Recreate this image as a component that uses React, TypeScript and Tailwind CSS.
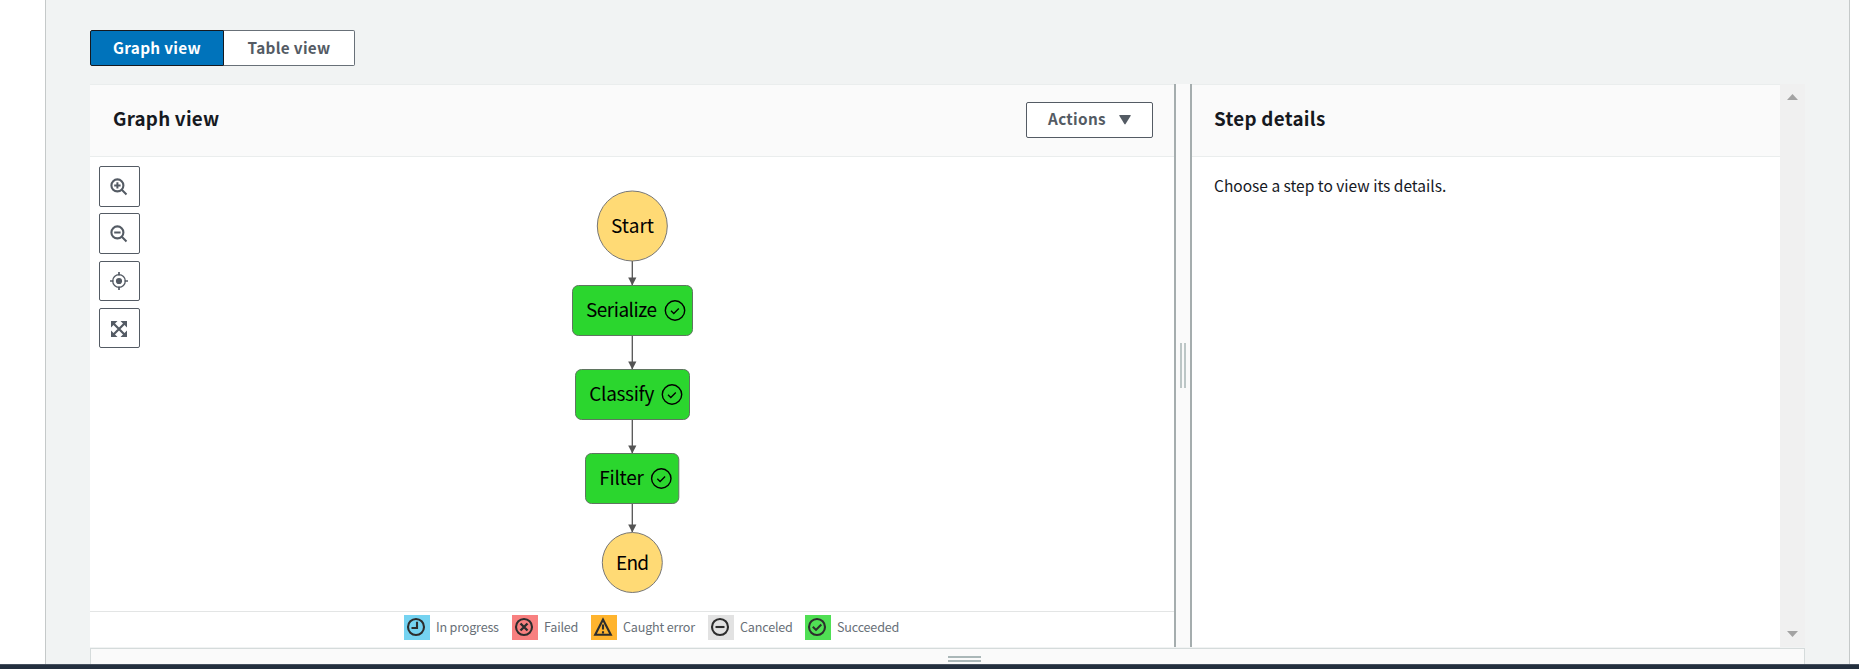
import type { ReactNode } from 'react';

const ink = '#545b64';

function ToolButton({ className, children }: { className: string; children: ReactNode }) {
  return (
    <button className={`flex w-[41px] items-center justify-center rounded-[2px] border border-[#545b64] bg-white pr-[2px] ${className}`}>
      <svg width="18" height="18" viewBox="0 0 18 18" fill="none" stroke={ink}>
        {children}
      </svg>
    </button>
  );
}

const steps = [
  { label: 'Serialize', x: 572.5, y: 285.5, w: 120, textX: 586, textW: 71, iconX: 675 },
  { label: 'Classify', x: 575.5, y: 369.5, w: 114, textX: 589.3, textW: 65, iconX: 672 },
  { label: 'Filter', x: 585.5, y: 453.5, w: 93.3, textX: 599.3, textW: 44.5, iconX: 661.3 },
];

const edges = [
  [261, 285],
  [336, 369],
  [420, 453],
  [504, 532],
];

function Graph() {
  return (
    <svg width="1084" height="454" viewBox="90 157 1084 454" fontSize="19" className="block font-['Noto_Sans_CJK_JP',sans-serif]">
      {edges.map(([from, to]) => (
        <g key={from}>
          <path d={`M632.3 ${from}V${to}`} stroke="#545454" strokeWidth="1.3" />
          <path d={`M628.2 ${to - 7.5}h8.2l-4.1 8z`} fill="#545454" />
        </g>
      ))}
      <circle cx="632.3" cy="226" r="35" fill="#ffda75" stroke="#777" />
      <text x="611" y="233.4" textLength="43">Start</text>
      {steps.map((s) => (
        <g key={s.label}>
          <rect x={s.x} y={s.y} width={s.w} height="50" rx="6" fill="#2bd62e" stroke="#5f7560" />
          <text x={s.textX} y={s.y + 31.7} textLength={s.textW}>{s.label}</text>
          <circle cx={s.iconX} cy={s.y + 25} r="9.7" fill="none" stroke="#000" strokeWidth="1.4" />
          <path d={`M${s.iconX - 4} ${s.y + 25.2}l2.8 2.8l5-5`} fill="none" stroke="#000" strokeWidth="1.3" />
        </g>
      ))}
      <circle cx="632.3" cy="562.5" r="30" fill="#ffda75" stroke="#777" />
      <text x="616" y="570.4" textLength="33">End</text>
    </svg>
  );
}

function LegendItem({ color, width, label, children }: { color: string; width: string; label: string; children: ReactNode }) {
  return (
    <div className={`flex h-[25px] items-center ${width}`}>
      <span className={`flex h-[25px] w-[26px] shrink-0 items-center justify-center pb-px pr-[2px] ${color}`}>
        <svg width="20" height="20" viewBox="0 0 20 20" fill="none" stroke="#2d2d2d" strokeWidth="2.1">
          {children}
        </svg>
      </span>
      <span className="ml-[6px] whitespace-nowrap pb-[2px] text-[12.6px] leading-5 tracking-[-0.2px] text-[#687078]">{label}</span>
    </div>
  );
}

export default function App() {
  return (
    <div className="flex h-[669px] w-full flex-col overflow-hidden bg-white font-['Noto_Sans_CJK_JP',sans-serif] text-[#16191f]">
      <div className="ml-[45px] h-[664px] w-[1805px] shrink-0 border-x border-[#c5c9c9] bg-[#f1f3f3] pl-[44px] pt-[30px]">
        <div className="flex h-9 text-[15.3px] font-bold tracking-[0.3px]">
          <button className="flex w-[134px] items-center justify-center rounded-l-[2px] border border-[#16191f] bg-[#0073bb] pb-[2px] text-white">Graph view</button>
          <button className="flex w-[131px] items-center justify-center rounded-r-[2px] border border-l-0 border-[#687078] bg-white pb-[2px] text-[#545b64]">Table view</button>
        </div>

        <div className="mt-[18px] flex h-[563px] w-[1715px]">
          <section className="flex w-[1084px] flex-col bg-white">
            <header className="flex h-[73px] shrink-0 items-center justify-between border-y border-[#eaeded] bg-[#fafafa] pb-[2px] pl-[23px] pr-[21px]">
              <h2 className="pb-[2px] text-[18.8px] font-bold tracking-[0.22px]">Graph view</h2>
              <button className="flex h-9 w-[127px] items-center justify-center gap-[13px] rounded-[2px] border border-[#545b64] bg-white text-[15.3px] font-bold tracking-[0.3px] text-[#545b64]">
                <span className="pb-[2px]">Actions</span>
                <svg width="12" height="10" viewBox="0 0 12 10" fill={ink}><path d="M.8 0h10.4q.8 0 .5.7L6.6 9q-.6.8-1.2 0L.3.7Q0 0 .8 0Z" /></svg>
              </button>
            </header>
            <div className="relative h-[454px] shrink-0">
              <Graph />
              <div className="absolute left-[9px] top-[9px] flex flex-col">
                <ToolButton className="h-[41px]">
                  <circle cx="7.4" cy="7.4" r="6" strokeWidth="2.1" />
                  <path d="M11.8 11.8l4.7 4.7M4.2 7.4h6.4M7.4 4.2v6.4" strokeWidth="2" />
                </ToolButton>
                <ToolButton className="mt-[6px] h-[41px]">
                  <circle cx="7.4" cy="7.4" r="6" strokeWidth="2.1" />
                  <path d="M11.8 11.8l4.7 4.7M4.2 7.4h6.4" strokeWidth="2" />
                </ToolButton>
                <ToolButton className="mt-[7px] h-10">
                  <circle cx="9" cy="9" r="6.3" strokeWidth="1.3" />
                  <circle cx="9" cy="9" r="3.1" fill={ink} stroke="none" />
                  <path d="M9 0v3.5M9 14.5v3.5M0 9h3.5M14.5 9h3.5" strokeWidth="1.7" />
                </ToolButton>
                <ToolButton className="mt-[7px] h-10 pt-px">
                  <path d="M2.5 2.5l13 13M15.5 2.5l-13 13" strokeWidth="2.2" />
                  <path d="M1 1h6.500L1 7.500ZM17 1v6.500L10.500 1ZM17 17h-6.500L17 10.500ZM1 17v-6.500L7.500 17Z" fill={ink} stroke="none" />
                </ToolButton>
              </div>
            </div>
            <footer className="flex h-[36px] border-t border-[#e3e5e5] pl-[314px] pt-[3px]">
              <LegendItem color="bg-[#75d3f1]" width="w-[108px]" label="In progress">
                <circle cx="10" cy="10" r="8" />
                <path d="M11 4.8V11H5.5" />
              </LegendItem>
              <LegendItem color="bg-[#f88080]" width="w-[79px]" label="Failed">
                <circle cx="10" cy="10" r="8" />
                <path d="M6.5 6.5l7 7M13.5 6.5l-7 7" strokeWidth="2.4" />
              </LegendItem>
              <LegendItem color="bg-[#ffb42e]" width="w-[117px]" label="Caught error">
                <path d="M10 2.5L2.2 17.7h15.6Z" />
                <path d="M10 7.5v5M10 14.2v2.3" />
              </LegendItem>
              <LegendItem color="bg-[#e2e2e2]" width="w-[97px]" label="Canceled">
                <circle cx="10" cy="10" r="8" />
                <path d="M5.5 10h9" />
              </LegendItem>
              <LegendItem color="bg-[#50df54]" width="w-[92px]" label="Succeeded">
                <circle cx="10" cy="10" r="8" />
                <path d="M5.8 9.8l3.2 3.1l5.3-5.3" />
              </LegendItem>
            </footer>
          </section>

          <div className="flex w-[18px] items-center justify-center gap-[2px] border-x-2 border-[#a5adae] bg-[#fafafa] pb-px">
            <i className="h-[45px] w-[2px] bg-[#bcc6c6]" />
            <i className="h-[45px] w-[2px] bg-[#bcc6c6]" />
          </div>

          <section className="w-[588px] bg-white">
            <header className="flex h-[73px] items-center border-y border-[#eaeded] bg-[#fafafa] pb-[4px] pl-[22px]">
              <h2 className="text-[18.8px] font-bold tracking-[0.28px]">Step details</h2>
            </header>
            <p className="pl-[22px] pt-[16px] text-[15.5px] leading-6">Choose a step to view its details.</p>
          </section>

          <div className="flex w-[25px] flex-col items-center justify-between bg-[#f0f0f0] pb-[10px] pt-[10px]">
            <svg width="11" height="6" viewBox="0 0 11 6" fill="#a3a3a3"><path d="M0 6L5.5 0L11 6Z" /></svg>
            <svg width="11" height="6" viewBox="0 0 11 6" fill="#a3a3a3"><path d="M0 0L5.5 6L11 0Z" /></svg>
          </div>
        </div>

        <div className="mt-px flex h-4 w-[1715px] flex-col items-center gap-[2px] border border-b-0 border-[#d5dbdb] bg-[#fafafa] pl-[34px] pt-[7px]">
          <i className="h-[2px] w-[33px] bg-[#aab7b8]" />
          <i className="h-[2px] w-[33px] bg-[#aab7b8]" />
        </div>
      </div>
      <div className="h-[5px] w-full shrink-0 border-t border-[#46505e] bg-[#232f3e]" />
    </div>
  );
}
